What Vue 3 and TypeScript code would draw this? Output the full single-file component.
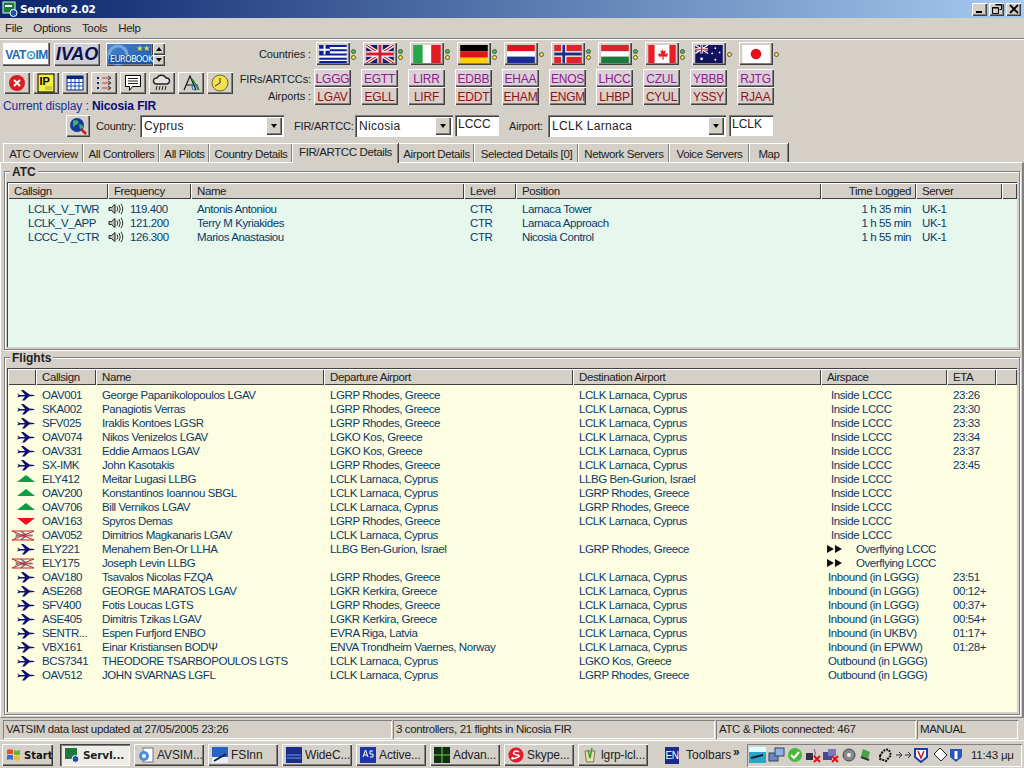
<script setup lang="ts">
interface Flag { id: string; fir: string; apt: string; both: boolean }
interface Atc { call: string; freq: string; name: string; level: string; pos: string; time: string; server: string }
interface Flight { icon: string; call: string; name: string; dep: string; dest: string; air: string; eta: string }

const flags: Flag[] = [
  { id: 'gr', fir: 'LGGG', apt: 'LGAV', both: true },
  { id: 'uk', fir: 'EGTT', apt: 'EGLL', both: true },
  { id: 'it', fir: 'LIRR', apt: 'LIRF', both: true },
  { id: 'de', fir: 'EDBB', apt: 'EDDT', both: true },
  { id: 'nl', fir: 'EHAA', apt: 'EHAM', both: false },
  { id: 'no', fir: 'ENOS', apt: 'ENGM', both: true },
  { id: 'hu', fir: 'LHCC', apt: 'LHBP', both: true },
  { id: 'ca', fir: 'CZUL', apt: 'CYUL', both: true },
  { id: 'au', fir: 'YBBB', apt: 'YSSY', both: false },
  { id: 'jp', fir: 'RJTG', apt: 'RJAA', both: false },
]

const tools = ['stop', 'ip', 'table', 'list', 'chat', 'rain', 'font', 'clock']

const tabs = [
  { label: 'ATC Overview', w: 80 },
  { label: 'All Controllers', w: 76 },
  { label: 'All Pilots', w: 50 },
  { label: 'Country Details', w: 83 },
  { label: 'FIR/ARTCC Details', w: 106, active: true },
  { label: 'Airport Details', w: 76 },
  { label: 'Selected Details [0]', w: 104 },
  { label: 'Network Servers', w: 91 },
  { label: 'Voice Servers', w: 80 },
  { label: 'Map', w: 39 },
]

const atcHead = ['Callsign', 'Frequency', 'Name', 'Level', 'Position', 'Time Logged', 'Server', '']
const atc: Atc[] = [
  { call: 'LCLK_V_TWR', freq: '119.400', name: 'Antonis Antoniou', level: 'CTR', pos: 'Larnaca Tower', time: '1 h 35 min', server: 'UK-1' },
  { call: 'LCLK_V_APP', freq: '121.200', name: 'Terry M Kyriakides', level: 'CTR', pos: 'Larnaca Approach', time: '1 h 55 min', server: 'UK-1' },
  { call: 'LCCC_V_CTR', freq: '126.300', name: 'Marios Anastasiou', level: 'CTR', pos: 'Nicosia Control', time: '1 h 55 min', server: 'UK-1' },
]

const flightHead = ['', 'Callsign', 'Name', 'Departure Airport', 'Destination Airport', 'Airspace', 'ETA', '']
const rhodes = 'LGRP Rhodes, Greece'
const kos = 'LGKO Kos, Greece'
const larnaca = 'LCLK Larnaca, Cyprus'
const flights: Flight[] = [
  { icon: 'plane', call: 'OAV001', name: 'George Papanikolopoulos LGAV', dep: rhodes, dest: larnaca, air: 'Inside LCCC', eta: '23:26' },
  { icon: 'plane', call: 'SKA002', name: 'Panagiotis Verras', dep: rhodes, dest: larnaca, air: 'Inside LCCC', eta: '23:30' },
  { icon: 'plane', call: 'SFV025', name: 'Iraklis Kontoes LGSR', dep: rhodes, dest: larnaca, air: 'Inside LCCC', eta: '23:33' },
  { icon: 'plane', call: 'OAV074', name: 'Nikos Venizelos LGAV', dep: kos, dest: larnaca, air: 'Inside LCCC', eta: '23:34' },
  { icon: 'plane', call: 'OAV331', name: 'Eddie Armaos LGAV', dep: kos, dest: larnaca, air: 'Inside LCCC', eta: '23:37' },
  { icon: 'plane', call: 'SX-IMK', name: 'John Kasotakis', dep: rhodes, dest: larnaca, air: 'Inside LCCC', eta: '23:45' },
  { icon: 'up', call: 'ELY412', name: 'Meitar Lugasi LLBG', dep: larnaca, dest: 'LLBG Ben-Gurion, Israel', air: 'Inside LCCC', eta: '' },
  { icon: 'up', call: 'OAV200', name: 'Konstantinos Ioannou SBGL', dep: larnaca, dest: rhodes, air: 'Inside LCCC', eta: '' },
  { icon: 'up', call: 'OAV706', name: 'Bill Vernikos LGAV', dep: larnaca, dest: rhodes, air: 'Inside LCCC', eta: '' },
  { icon: 'down', call: 'OAV163', name: 'Spyros Demas', dep: rhodes, dest: larnaca, air: 'Inside LCCC', eta: '' },
  { icon: 'cross', call: 'OAV052', name: 'Dimitrios Magkanaris LGAV', dep: larnaca, dest: '', air: 'Inside LCCC', eta: '' },
  { icon: 'plane', call: 'ELY221', name: 'Menahem Ben-Or LLHA', dep: 'LLBG Ben-Gurion, Israel', dest: rhodes, air: 'Overflying LCCC', eta: '' },
  { icon: 'cross', call: 'ELY175', name: 'Joseph Levin LLBG', dep: '', dest: '', air: 'Overflying LCCC', eta: '' },
  { icon: 'plane', call: 'OAV180', name: 'Tsavalos Nicolas FZQA', dep: rhodes, dest: larnaca, air: 'Inbound (in LGGG)', eta: '23:51' },
  { icon: 'plane', call: 'ASE268', name: 'GEORGE MARATOS LGAV', dep: 'LGKR Kerkira, Greece', dest: larnaca, air: 'Inbound (in LGGG)', eta: '00:12+' },
  { icon: 'plane', call: 'SFV400', name: 'Fotis Loucas  LGTS', dep: rhodes, dest: larnaca, air: 'Inbound (in LGGG)', eta: '00:37+' },
  { icon: 'plane', call: 'ASE405', name: 'Dimitris Tzikas LGAV', dep: 'LGKR Kerkira, Greece', dest: larnaca, air: 'Inbound (in LGGG)', eta: '00:54+' },
  { icon: 'plane', call: 'SENTR...', name: 'Espen Furfjord ENBO', dep: 'EVRA Riga, Latvia', dest: larnaca, air: 'Inbound (in UKBV)', eta: '01:17+' },
  { icon: 'plane', call: 'VBX161', name: 'Einar Kristiansen BODΨ', dep: 'ENVA Trondheim Vaernes, Norway', dest: larnaca, air: 'Inbound (in EPWW)', eta: '01:28+' },
  { icon: 'plane', call: 'BCS7341', name: 'THEODORE TSARBOPOULOS LGTS', dep: larnaca, dest: kos, air: 'Outbound (in LGGG)', eta: '' },
  { icon: 'plane', call: 'OAV512', name: 'JOHN SVARNAS LGFL', dep: larnaca, dest: rhodes, air: 'Outbound (in LGGG)', eta: '' },
]

const airIndent = (f: Flight) => f.air.startsWith('Inside') ? 'inside' : f.air.startsWith('Over') ? 'over' : 'bound'

const tasks = [
  { label: 'ServI...', icon: 'serv', active: true },
  { label: 'AVSIM...', icon: 'ie' },
  { label: 'FSInn', icon: 'fs' },
  { label: 'WideC...', icon: 'wide' },
  { label: 'Active...', icon: 'as' },
  { label: 'Advan...', icon: 'adv' },
  { label: 'Skype...', icon: 'skype' },
  { label: 'lgrp-lcl...', icon: 'bin' },
]
</script>

<template>
  <div class="win">
    <div class="title">
      <svg class="appicon" width="16" height="16" viewBox="0 0 16 16">
        <rect x="1" y="1" width="12" height="11" fill="#1c7a3c" stroke="#cfe" />
        <rect x="3" y="4" width="7" height="2" fill="#fff" />
        <circle cx="11.5" cy="12" r="3.5" fill="#1c4fb0" stroke="#fff" />
      </svg>
      <span class="titletext">ServInfo 2.02</span>
      <div class="winbtns">
        <button class="wb"><svg width="10" height="10" viewBox="0 0 10 10"><rect x="1" y="7" width="6" height="2" fill="#000" /></svg></button>
        <button class="wb"><svg width="10" height="10" viewBox="0 0 10 10"><path d="M3.5 .5h6v5h-2M.5 3.500h6v6h-6z M.5 4h6M3.5 1h6" fill="none" stroke="#000" /></svg></button>
        <button class="wb x"><svg width="10" height="10" viewBox="0 0 10 10"><path d="M1 1l8 8M9 1l-8 8" stroke="#000" stroke-width="1.8" /></svg></button>
      </div>
    </div>

    <div class="menu">
      <span>File</span><span>Options</span><span>Tools</span><span>Help</span>
    </div>

    <div class="toolbar">
      <div class="top">
        <div class="leftcol">
          <div class="logos">
            <button class="logo vat"><span class="vt">VAT</span><span class="vo">⊙</span><span class="vt">IM</span></button>
            <button class="logo ivao">IVAO</button>
            <button class="logo euro">
              <svg class="arc" width="47" height="23" viewBox="0 0 47 23"><circle cx="12" cy="12" r="9" fill="none" stroke="#7aa8dc" stroke-width="3" /></svg>
              <span class="stars">★★</span><span class="eb">EUROBOOK</span>
            </button>
            <div class="spin">
              <button class="spb"><i class="tri up"></i></button>
              <button class="spb"><i class="tri"></i></button>
            </div>
          </div>
          <div class="tools">
            <button v-for="t in tools" :key="t" class="tool">
              <svg width="20" height="20" viewBox="0 0 20 20">
                <template v-if="t === 'stop'">
                  <circle cx="10" cy="10" r="8" fill="#dc1c24" />
                  <path d="M7 7l6 6M13 7l-6 6" stroke="#fff" stroke-width="2" />
                </template>
                <template v-else-if="t === 'ip'">
                  <rect x="2" y="1" width="16" height="18" fill="#f6f23c" stroke="#000" />
                  <rect x="9" y="13" width="7" height="4" fill="#c8c850" />
                  <text x="3.5" y="12" class="iptext">IP</text>
                </template>
                <template v-else-if="t === 'table'">
                  <rect x="2" y="3" width="16" height="14" fill="#fff" stroke="#06267a" />
                  <rect x="2" y="3" width="16" height="3" fill="#06267a" />
                  <path d="M2 9.500h16M2 13h16M6 6v11M10 6v11M14 6v11" stroke="#1d4ed8" />
                </template>
                <template v-else-if="t === 'list'">
                  <path d="M3 5h2M3 10h2M3 15h2" stroke="#06267a" stroke-width="2" />
                  <path d="M8 5h8M8 10h8M8 15h8" stroke="#c83c2c" />
                  <path d="M14 3l3 2-3 2M14 8l3 2-3 2M14 13l3 2-3 2" fill="none" stroke="#333" />
                </template>
                <template v-else-if="t === 'chat'">
                  <path d="M2.500 2.500h15v11h-8l-3 4v-4h-4z" fill="#fff" stroke="#000" />
                  <path d="M5 5.500h10M5 8h10M5 10.500h10" stroke="#222" />
                </template>
                <template v-else-if="t === 'rain'">
                  <path d="M4 11a3 3 0 0 1 1-6 5 5 0 0 1 9 0 3 3 0 0 1 1 6z" fill="#e4e4e4" stroke="#222" stroke-width="1.4" />
                  <path d="M5 13l-1 4M8 13l-1 4M11 13l-1 4M14 13l-1 4" stroke="#222" />
                </template>
                <template v-else-if="t === 'font'">
                  <path d="M3 17L9 3l6 14M5.500 12h7" fill="none" stroke="#111" stroke-width="1.2" />
                  <path d="M11 6l7 11" stroke="#1a8a3a" stroke-width="1.5" />
                  <circle cx="14" cy="14" r="3" fill="none" stroke="#2a6ab0" />
                </template>
                <template v-else>
                  <circle cx="10" cy="10" r="8" fill="#f4e050" stroke="#6a6a20" />
                  <path d="M10 5v5l-5 3" fill="none" stroke="#333" />
                </template>
              </svg>
            </button>
          </div>
          <div class="current">Current display : <b>Nicosia FIR</b></div>
        </div>

        <div class="labels">
          <span class="l1">Countries :</span>
          <span class="l2">FIRs/ARTCCs:</span>
          <span class="l3">Airports :</span>
        </div>
        <div v-for="f in flags" :key="f.id" class="flagcol">
          <div class="flagline">
            <button class="flag">
              <svg width="28" height="18" viewBox="0 0 26 17">
                <template v-if="f.id === 'gr'">
                  <rect width="26" height="17" fill="#fff" />
                  <path d="M0 1h26M0 5h26M0 9h26M0 13h26M0 16h26" stroke="#0a1e96" stroke-width="1.9" />
                  <rect width="10" height="9" fill="#0a1e96" />
                  <path d="M5 0v9M0 4.500h10" stroke="#fff" stroke-width="1.8" />
                </template>
                <template v-else-if="f.id === 'uk'">
                  <rect width="26" height="17" fill="#1a1a6a" />
                  <path d="M0 0l26 17M26 0L0 17" stroke="#fff" stroke-width="3.4" />
                  <path d="M0 0l26 17M26 0L0 17" stroke="#d01c2c" stroke-width="1.2" />
                  <path d="M13 0v17M0 8.500h26" stroke="#fff" stroke-width="5" />
                  <path d="M13 0v17M0 8.500h26" stroke="#d01c2c" stroke-width="2.8" />
                </template>
                <template v-else-if="f.id === 'it'">
                  <rect width="9" height="17" fill="#22a848" />
                  <rect x="9" width="8" height="17" fill="#fff" />
                  <rect x="17" width="9" height="17" fill="#e21c24" />
                </template>
                <template v-else-if="f.id === 'de'">
                  <rect width="26" height="6" fill="#000" />
                  <rect y="6" width="26" height="6" fill="#e0141c" />
                  <rect y="12" width="26" height="5" fill="#fcd00c" />
                </template>
                <template v-else-if="f.id === 'nl'">
                  <rect width="26" height="6" fill="#e0141c" />
                  <rect y="6" width="26" height="5" fill="#fff" />
                  <rect y="11" width="26" height="6" fill="#1c2c96" />
                </template>
                <template v-else-if="f.id === 'no'">
                  <rect width="26" height="17" fill="#e0242c" />
                  <path d="M9 0v17M0 8.500h26" stroke="#fff" stroke-width="5" />
                  <path d="M9 0v17M0 8.500h26" stroke="#1c2c86" stroke-width="2.6" />
                </template>
                <template v-else-if="f.id === 'hu'">
                  <rect width="26" height="6" fill="#d8242c" />
                  <rect y="6" width="26" height="5" fill="#fff" />
                  <rect y="11" width="26" height="6" fill="#1c7a3c" />
                </template>
                <template v-else-if="f.id === 'ca'">
                  <rect width="26" height="17" fill="#fff" />
                  <rect width="6" height="17" fill="#ec1c24" />
                  <rect x="20" width="6" height="17" fill="#ec1c24" />
                  <path d="M13 3l1.500 3 2-1-.7 4 2-1.500.8 1.500-1 2-3.100-.2.2 3h-1.400l.2-3-3.100.2-1-2 .8-1.500 2 1.500-.7-4 2 1z" fill="#ec1c24" />
                </template>
                <template v-else-if="f.id === 'au'">
                  <rect width="26" height="17" fill="#12125e" />
                  <rect width="12" height="8" fill="#2a2a72" />
                  <path d="M0 0l12 8M12 0L0 8" stroke="#fff" stroke-width="1.2" />
                  <path d="M6 0v8M0 4h12" stroke="#fff" stroke-width="2.2" />
                  <path d="M6 0v8M0 4h12" stroke="#d01c2c" stroke-width="1" />
                  <circle cx="6" cy="13" r="1.3" fill="#fff" />
                  <circle cx="19" cy="3" r=".8" fill="#fff" />
                  <circle cx="23" cy="7" r=".8" fill="#fff" />
                  <circle cx="16" cy="8" r=".8" fill="#fff" />
                  <circle cx="19" cy="14" r=".9" fill="#fff" />
                </template>
                <template v-else>
                  <rect width="26" height="17" fill="#fff" />
                  <circle cx="13" cy="8.500" r="5" fill="#e80c1c" />
                </template>
              </svg>
            </button>
            <div class="dots">
              <i v-if="f.both" class="dot g"></i>
              <i class="dot y"></i>
            </div>
          </div>
          <button class="code fir">{{ f.fir }}</button>
          <button class="code apt">{{ f.apt }}</button>
        </div>
      </div>

      <div class="selects">
        <button class="globe">
          <svg width="20" height="20" viewBox="0 0 20 20">
            <circle cx="9" cy="9" r="7" fill="#0d3c9a" />
            <path d="M5 5q3-2 5 0t-2 4-1 4q-3-3-2-8z M11 8q3 0 4 2t-3 3z" fill="#4aa86a" />
            <path d="M13 13l5 5" stroke="#c01c24" stroke-width="2.5" />
          </svg>
        </button>
        <span class="lab country">Country:</span>
        <div class="combo" style="width: 144px"><span>Cyprus</span><button class="drop"><i class="tri"></i></button></div>
        <span class="lab fir2">FIR/ARTCC:</span>
        <div class="combo" style="width: 98px"><span>Nicosia</span><button class="drop"><i class="tri"></i></button></div>
        <div class="edit">LCCC</div>
        <span class="lab airp">Airport:</span>
        <div class="combo" style="width: 178px"><span>LCLK Larnaca</span><button class="drop"><i class="tri"></i></button></div>
        <div class="edit e2">LCLK</div>
      </div>
    </div>

    <div class="tabs">
      <div v-for="t in tabs" :key="t.label" class="tab" :class="{ active: t.active }" :style="{ width: t.w + 'px' }">{{ t.label }}</div>
    </div>

    <div class="page">
      <div class="group atcgroup">
        <span class="legend">ATC</span>
        <div class="list">
          <div class="head atccols">
            <span v-for="(h, i) in atcHead" :key="i" class="hc" :class="{ rt: h === 'Time Logged' }">{{ h }}</span>
          </div>
          <div class="body green">
            <div v-for="a in atc" :key="a.call" class="row atccols">
              <span class="ind">{{ a.call }}</span>
              <span class="freq">
                <svg width="18" height="12" viewBox="0 0 18 12">
                  <path d="M1 4.500h2.500L7 1.500v9L3.500 7.500H1z" fill="#bbb" stroke="#222" />
                  <path d="M9 3.500q1.500 2.500 0 5M11 2q2.500 4 0 8M13 .8q3.500 5.200 0 10.400" fill="none" stroke="#333" />
                </svg>
                {{ a.freq }}
              </span>
              <span>{{ a.name }}</span>
              <span>{{ a.level }}</span>
              <span>{{ a.pos }}</span>
              <span class="rt">{{ a.time }}</span>
              <span>{{ a.server }}</span>
            </div>
          </div>
        </div>
      </div>

      <div class="group flightgroup">
        <span class="legend">Flights</span>
        <div class="list">
          <div class="head flcols">
            <span v-for="(h, i) in flightHead" :key="i" class="hc">{{ h }}</span>
          </div>
          <div class="body yellow">
            <div v-for="f in flights" :key="f.call" class="row flcols">
              <span class="ic">
                <svg v-if="f.icon === 'plane'" width="18" height="11" viewBox="0 0 18 11">
                  <path d="M0 3.500l3 1.500 5 0L4 0h2.500l6 4.500 4.500.5q1 .5 0 1l-5 .5-4.500 4H5l3-4-4.500 0-3.500 1 1.500-2z" fill="#10106e" />
                </svg>
                <svg v-else-if="f.icon === 'up'" width="18" height="8" viewBox="0 0 18 8"><path d="M9 0l9 7H0z" fill="#0f9a44" /></svg>
                <svg v-else-if="f.icon === 'down'" width="18" height="8" viewBox="0 0 18 8"><path d="M0 1h18L9 8z" fill="#ec1018" /></svg>
                <svg v-else width="24" height="11" viewBox="0 0 24 11">
                  <path d="M4 3l3 1.500h5L9 1h2l5 3.500h5q2 1 0 2h-5L11 10H9l3-3.500H7L4 8l1-2.500z" fill="#8a7a90" />
                  <path d="M1 1l22 9M23 1L1 10M1 1h22M1 10h22" stroke="#c82020" />
                </svg>
              </span>
              <span>{{ f.call }}</span>
              <span>{{ f.name }}</span>
              <span>{{ f.dep }}</span>
              <span>{{ f.dest }}</span>
              <span class="air" :class="airIndent(f)">
                <svg v-if="airIndent(f) === 'over'" class="ff" width="16" height="8" viewBox="0 0 16 8">
                  <path d="M0 0l7 4-7 4zM8 0l7 4-7 4z" fill="#111" />
                </svg>
                {{ f.air }}
              </span>
              <span>{{ f.eta }}</span>
            </div>
          </div>
        </div>
      </div>
    </div>

    <div class="status">
      <span style="width: 389px">VATSIM data last updated at 27/05/2005 23:26</span>
      <span style="width: 322px">3 controllers, 21 flights in Nicosia FIR</span>
      <span style="width: 200px">ATC &amp; Pilots connected: 467</span>
      <span style="width: 101px">MANUAL</span>
    </div>

    <div class="taskbar">
      <button class="start">
        <svg width="15" height="14" viewBox="0 0 15 14">
          <path d="M1 2q3-1.500 6 0v4.500q-3-1.500-6 0z" fill="#e0502c" />
          <path d="M8 2q3 1.500 6 0v4.500q-3 1.500-6 0z" fill="#6cb030" />
          <path d="M1 7.500q3-1.500 6 0V12q-3-1.500-6 0z" fill="#3c6cd0" />
          <path d="M8 7.500q3 1.500 6 0V12q-3 1.500-6 0z" fill="#f0c020" />
        </svg>
        Start
      </button>
      <span class="grip"></span>
      <div v-for="t in tasks" :key="t.icon" class="task" :class="{ active: t.active }">
        <svg width="16" height="16" viewBox="0 0 16 16">
          <template v-if="t.icon === 'serv'">
            <rect x="1" y="1" width="12" height="11" fill="#1c7a3c" />
            <circle cx="11.5" cy="12" r="3.5" fill="#1c4fb0" stroke="#fff" />
          </template>
          <template v-else-if="t.icon === 'ie'">
            <rect x="5" y="1" width="10" height="14" fill="#fff" stroke="#777" />
            <circle cx="6" cy="9" r="5" fill="#4a90d8" />
            <circle cx="6" cy="9" r="2" fill="#fff" />
          </template>
          <template v-else-if="t.icon === 'fs'">
            <rect width="16" height="16" fill="#2a62c8" />
            <rect y="10" width="16" height="6" fill="#e8f0ff" />
            <path d="M2 14L14 7" stroke="#123" stroke-width="2" />
          </template>
          <template v-else-if="t.icon === 'wide'">
            <rect width="16" height="16" fill="#1c2c8c" />
            <path d="M1 8h14M1 11h14" stroke="#6a9ae0" />
          </template>
          <template v-else-if="t.icon === 'as'">
            <rect width="16" height="16" fill="#1c36a8" />
            <path d="M3 10l2.500-7L8 10M4 8h3M13 4H10v3h3v3h-3" fill="none" stroke="#fff" />
          </template>
          <template v-else-if="t.icon === 'adv'">
            <rect width="16" height="16" fill="#123018" />
            <path d="M0 8h16M8 0v16" stroke="#6ad040" />
          </template>
          <template v-else-if="t.icon === 'skype'">
            <circle cx="8" cy="8" r="7.5" fill="#e01c2c" />
            <path d="M11 5q-3-2-5 0t3 3-1 3-3-1" fill="none" stroke="#fff" stroke-width="1.5" />
          </template>
          <template v-else>
            <path d="M3 4h10l-1.500 11h-7z" fill="#e8e0a0" stroke="#776" />
            <path d="M6 3l2 8M10 1L8 11" stroke="#3a9a3a" stroke-width="1.5" />
          </template>
        </svg>
        <span :class="{ tb: t.active }">{{ t.label }}</span>
      </div>
      <span class="en">EN</span>
      <span class="tbtext">Toolbars</span>
      <span class="chev">»</span>
      <div class="tray">
        <svg width="214" height="18" viewBox="0 0 214 18">
          <rect x="0" y="1" width="17" height="16" fill="#28a8c8" />
          <rect x="0" y="1" width="17" height="5" fill="#dff" />
          <path d="M2 12l12-3" stroke="#123" stroke-width="2" />
          <rect x="20" y="7" width="9" height="8" fill="#6a8ad0" stroke="#345" />
          <rect x="26" y="2" width="9" height="8" fill="#90b0e8" stroke="#345" />
          <circle cx="46" cy="9" r="7" fill="#48b838" />
          <path d="M42 9l3 3 5-6" fill="none" stroke="#fff" stroke-width="2" />
          <rect x="57" y="7" width="7" height="7" fill="#334" />
          <path d="M65 3q3 4 0 8" fill="none" stroke="#667" />
          <path d="M65 10l6 6M71 10l-6 6" stroke="#e01010" stroke-width="2" />
          <rect x="74" y="6" width="9" height="8" fill="#4a4a90" />
          <rect x="79" y="3" width="8" height="7" fill="#7a7ac0" />
          <path d="M83 10l6 6M89 10l-6 6" stroke="#e01010" stroke-width="2" />
          <circle cx="100" cy="9" r="6" fill="#888" stroke="#444" />
          <circle cx="100" cy="9" r="2" fill="#eee" />
          <path d="M114 3l7 3-2 7-7-3z" fill="#48a048" />
          <path d="M112 11l8 3" stroke="#333" stroke-width="2" />
          <path d="M131 10q4-8 9-6l2 5-5 6-6-2z" fill="none" stroke="#111" stroke-width="2" stroke-dasharray="2 1" />
          <path d="M147 9h6M150 6l3 3-3 3M156 9h6M159 6l3 3-3 3" fill="none" stroke="#334" />
          <path d="M166 3h12v8l-6 5-6-5z" fill="#fff" stroke="#1a3ca8" stroke-width="2" />
          <path d="M169 5l3 7 3-7" fill="none" stroke="#c02020" stroke-width="1.5" />
          <path d="M191 2l7 7-6 6-7-7z" fill="#fff" stroke="#222" />
          <path d="M201 3h12v8l-6 5-6-5z" fill="#2a56b8" />
          <path d="M207 5v8" stroke="#fff" stroke-width="3" />
        </svg>
        <span class="clock">11:43 μμ</span>
      </div>
    </div>
  </div>
</template>

<style scoped>
.win {
  width: 1024px;
  height: 768px;
  overflow: hidden;
  display: flex;
  flex-direction: column;
  background: #d4d0c8;
  font-family: "Liberation Sans", Arial, sans-serif;
  font-size: 12px;
  color: #222;
}
button {
  font-family: inherit;
  padding: 0;
  margin: 0;
  border: 0;
  background: #d4d0c8;
  box-shadow: inset 1px 1px #fff, inset -1px -1px #404040, inset -2px -2px #808080;
}
.title {
  height: 18px;
  flex: none;
  display: flex;
  align-items: center;
  background: linear-gradient(90deg, #0a246a, #a6caf0);
  color: #fff;
}
.appicon { margin: 0 2px 0 2px; }
.titletext { font: bold 10.5px "DejaVu Sans", sans-serif; letter-spacing: -.3px; }
.winbtns { margin-left: auto; margin-right: 3px; display: flex; gap: 2px; }
.wb { width: 15px; height: 13px; display: flex; align-items: center; justify-content: center; }
.menu {
  height: 20px;
  flex: none;
  display: flex;
  align-items: center;
  gap: 11px;
  padding-left: 5px;
  font-size: 11.5px;
  letter-spacing: -.3px;
  border-bottom: 1px solid #808080;
  box-shadow: 0 1px #fff;
}
.toolbar { flex: none; height: 103px; padding-top: 4px; box-sizing: border-box; }
.top { display: flex; height: 71px; }
.leftcol { width: 240px; flex: none; padding-left: 3px; box-sizing: border-box; }
.logos { display: flex; height: 23px; }
.logo { height: 23px; width: 47px; margin-right: 4px; position: relative; overflow: hidden; }
.vat { background: #fff; font-weight: bold; font-size: 12px; letter-spacing: -.5px; box-shadow: inset -1px -1px #404040, inset -2px -2px #808080; }
.vt { color: #1c6ab8; }
.vo { color: #1c9ab8; }
.ivao { width: 46px; font-style: italic; font-weight: bold; font-size: 18px; color: #10104c; background: #cfcfd8; margin-right: 6px; }
.euro { width: 47px; margin-right: 0; background: linear-gradient(135deg, #4a86cc, #1c58a8); color: #fff; }
.arc { position: absolute; left: 0; top: 0; }
.stars { position: absolute; top: 1px; right: 3px; color: #e8d848; font-size: 8px; }
.eb { position: absolute; left: 3px; bottom: 2px; font: 8px "DejaVu Sans", sans-serif; letter-spacing: -.4px; background: #1c58a8; padding: 0 1px; }
.spin { width: 12px; display: flex; flex-direction: column; }
.spb { height: 11.5px; display: flex; align-items: center; justify-content: center; }
.tri { display: block; width: 0; height: 0; border-left: 3.5px solid transparent; border-right: 3.5px solid transparent; border-top: 4px solid #000; }
.tri.up { border-top: 0; border-bottom: 4px solid #000; }
.tools { display: flex; gap: 3px; margin-top: 6px; padding-left: 1px; }
.tool { width: 26px; height: 22px; display: flex; align-items: center; justify-content: center; }
.iptext { font: bold 11px "Liberation Sans", sans-serif; fill: #000; }
.current { margin-top: 5px; color: #1c2c96; font-size: 12px; letter-spacing: -.1px; }
.current b { color: #0a0a78; }
.labels { width: 75px; margin-left: -1px; flex: none; text-align: right; }
.labels span { display: block; padding-right: 3px; white-space: nowrap; font-size: 11px; line-height: 13px; letter-spacing: -.1px; }
.labels .l1 { margin-top: 5px; }
.labels .l2 { margin-top: 12px; }
.labels .l3 { margin-top: 4px; }
.flagcol { width: 47px; flex: none; display: flex; flex-direction: column; }
.flagline { display: flex; height: 23px; margin-top: -1px; padding-left: 2px; margin-bottom: 4px; }
.flag { width: 34px; height: 23px; display: flex; align-items: center; justify-content: center; }
.dots { width: 7px; margin-left: 1px; display: flex; flex-direction: column; justify-content: center; gap: 1px; padding-top: 1px; }
.dot { display: block; width: 5px; height: 5px; border-radius: 50%; border: 1px solid #555; box-sizing: border-box; }
.dot.g { background: #38c838; }
.dot.y { background: #f8e830; }
.code { width: 37px; height: 18px; font-size: 12px; line-height: 20px; text-align: center; overflow: hidden; letter-spacing: -.2px; }
.fir { color: #93178f; background: #dcd0d8; }
.apt { color: #8a1414; background: #dccfca; }
.selects { display: flex; align-items: center; height: 23px; padding-left: 66px; }
.globe { width: 24px; height: 22px; display: flex; align-items: center; justify-content: center; }
.lab { font-size: 11px; letter-spacing: -.2px; white-space: nowrap; }
.country { margin: 0 5px 0 6px; width: 39px; }
.fir2 { margin: 0 5px 0 10px; width: 56px; }
.airp { margin: 0 5px 0 10px; width: 34px; }
.combo {
  height: 22px;
  box-sizing: border-box;
  background: #fff;
  box-shadow: inset 1px 1px #808080, inset 2px 2px #404040, inset -1px -1px #fff;
  display: flex;
  align-items: center;
  padding-left: 4px;
  font-size: 12px;
  letter-spacing: .3px;
  justify-content: space-between;
}
.drop { width: 16px; height: 18px; margin-right: 2px; display: flex; align-items: center; justify-content: center; }
.edit {
  width: 44px;
  height: 21px;
  box-sizing: border-box;
  margin-left: 2px;
  padding: 2px 0 0 3px;
  background: #fff;
  box-shadow: inset 1px 1px #808080, inset 2px 2px #404040;
}
.e2 { margin-left: 3px; }
.tabs { height: 20px; flex: none; display: flex; align-items: flex-end; padding-left: 3px; }
.tab {
  height: 19px;
  box-sizing: border-box;
  flex: none;
  text-align: center;
  line-height: 20px;
  font-size: 11.5px;
  letter-spacing: -.38px;
  white-space: nowrap;
  border-top: 1px solid #fff;
  border-left: 1px solid #fff;
  box-shadow: inset -1px 0 #808080, 1px 0 #404040;
}
.tab.active { height: 20px; line-height: 17px; background: #d4d0c8; position: relative; z-index: 1; margin-bottom: -1px; }
.page {
  flex: none;
  height: 556px;
  box-sizing: border-box;
  padding: 8px 2px 2px 3px;
  border-top: 1px solid #fff;
  border-left: 1px solid #fff;
  border-right: 2px solid #808080;
  border-bottom: 1px solid #808080;
  display: flex;
  flex-direction: column;
  gap: 7px;
}
.group {
  position: relative;
  box-sizing: border-box;
  border: 1px solid #808080;
  box-shadow: inset 1px 1px #fff, 1px 1px #fff;
  padding: 10px 2px 2px 2px;
  display: flex;
}
.atcgroup { height: 179px; }
.flightgroup { flex: 1; }
.legend {
  position: absolute;
  left: 5px;
  top: -6px;
  padding: 0 2px;
  background: #d4d0c8;
  font-weight: bold;
  font-size: 12px;
  line-height: 12px;
}
.list {
  flex: 1;
  display: flex;
  flex-direction: column;
  box-shadow: inset 1px 1px #404040, inset -1px -1px #fff;
  padding: 1px 0 0 1px;
  min-width: 0;
}
.head { height: 16px; flex: none; }
.hc {
  box-sizing: border-box;
  height: 16px;
  line-height: 16px;
  padding-left: 6px;
  font-size: 11.5px;
  letter-spacing: -.4px;
  white-space: nowrap;
  box-shadow: inset 1px 1px #fff, inset -1px -1px #404040;
  overflow: hidden;
}
.hc.rt { text-align: right; padding-right: 5px; }
.atccols { display: grid; grid-template-columns: 100px 83px 273px 52px 305px 95px 86px 1fr; }
.flcols { display: grid; grid-template-columns: 28px 60px 228px 249px 248px 126px 49px 1fr; }
.body { flex: 1; padding-top: 3px; color: #0a3a68; font-size: 11.5px; letter-spacing: -.42px; }
.green { background: #e6f7ee; }
.yellow { background: #fdfde2; }
.row { height: 14px; line-height: 14px; white-space: nowrap; }
.row > span { padding-left: 6px; overflow: hidden; }
.row > .ind { padding-left: 20px; }
.row > .freq { padding-left: 0; display: flex; align-items: center; gap: 4px; }
.row > .rt { text-align: right; padding-right: 5px; }
.row > .ic { padding: 0 1px 0 0; display: flex; align-items: center; justify-content: flex-end; }
.row > .air.inside { padding-left: 10px; }
.row > .air.bound { padding-left: 7px; }
.row > .air.over { padding-left: 6px; display: flex; align-items: center; gap: 17px; }
.ff { flex: none; margin-right: -4px; }
.status { height: 21px; flex: none; margin-top: 1px; display: flex; padding: 1px 2px 0 3px; gap: 1px; box-sizing: border-box; }
.status span {
  box-sizing: border-box;
  flex: none;
  height: 19px;
  line-height: 18px;
  padding-left: 3px;
  font-size: 11.5px;
  letter-spacing: -.36px;
  white-space: nowrap;
  box-shadow: inset 1px 1px #808080, inset -1px -1px #fff;
}
.taskbar {
  flex: 1;
  display: flex;
  align-items: center;
  border-top: 1px solid #fff;
  padding: 1px 0 0 2px;
  font-size: 12px;
}
.start { width: 51px; height: 22px; display: flex; align-items: center; gap: 3px; padding-left: 4px; font: bold 10px "DejaVu Sans", sans-serif; color: #111; }
.grip { width: 7px; }
.task {
  width: 70px;
  height: 22px;
  margin-right: 4px;
  padding-left: 4px;
  box-sizing: border-box;
  flex: none;
  display: flex;
  align-items: center;
  gap: 3px;
  white-space: nowrap;
  overflow: hidden;
  letter-spacing: -.1px;
  box-shadow: inset 1px 1px #fff, inset -1px -1px #404040, inset -2px -2px #808080;
}
.task.active { background: #eeece6; box-shadow: inset 1px 1px #404040, inset 2px 2px #808080, inset -1px -1px #fff; }
.tb { font: bold 10.5px "DejaVu Sans", sans-serif; letter-spacing: -.2px; }
.en { margin-left: 13px; width: 14px; height: 17px; background: #1a2c8c; color: #fff; font-size: 10px; letter-spacing: -.5px; line-height: 17px; text-align: center; flex: none; }
.tbtext { margin-left: 7px; width: 47px; flex: none; }
.chev { font-weight: bold; font-size: 12px; width: 14px; margin-top: -6px; flex: none; }
.tray {
  width: 275px;
  height: 23px;
  box-sizing: border-box;
  flex: none;
  display: flex;
  align-items: center;
  padding-left: 2px;
  box-shadow: inset 1px 1px #808080, inset -1px -1px #fff;
}
.clock { margin-left: 8px; white-space: nowrap; font-size: 11.5px; letter-spacing: -.2px; }
</style>
